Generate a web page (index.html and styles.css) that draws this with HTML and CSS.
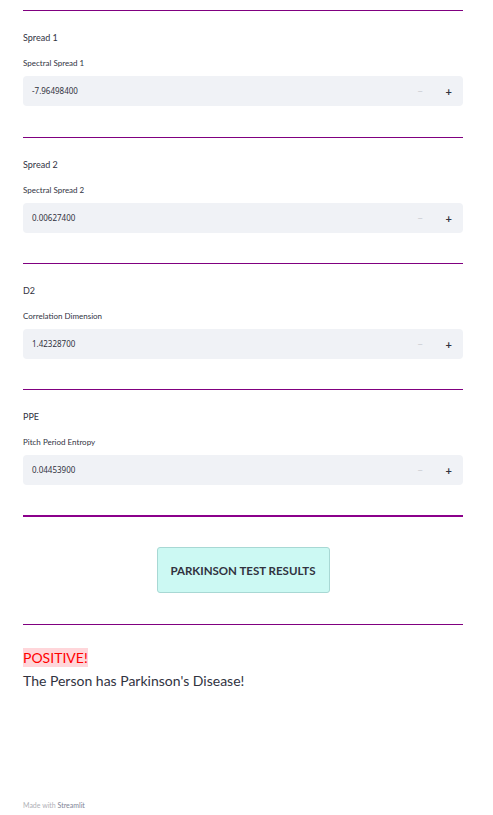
FILE: index.html
```html
<!DOCTYPE html>
<html>
<head>
<meta charset="utf-8">
<link rel="stylesheet" href="styles.css">
</head>
<body>
<main class="page">
  <section class="field">
    <hr class="rule">
    <p class="title">Spread 1</p>
    <label class="label">Spectral Spread 1</label>
    <div class="number">
      <div class="value">-7.96498400</div>
      <div class="steps"><span class="minus">−</span><span class="plus">+</span></div>
    </div>
  </section>
  <section class="field">
    <hr class="rule">
    <p class="title">Spread 2</p>
    <label class="label">Spectral Spread 2</label>
    <div class="number">
      <div class="value">0.00627400</div>
      <div class="steps"><span class="minus">−</span><span class="plus">+</span></div>
    </div>
  </section>
  <section class="field">
    <hr class="rule">
    <p class="title">D2</p>
    <label class="label">Correlation Dimension</label>
    <div class="number">
      <div class="value">1.42328700</div>
      <div class="steps"><span class="minus">−</span><span class="plus">+</span></div>
    </div>
  </section>
  <section class="field">
    <hr class="rule">
    <p class="title">PPE</p>
    <label class="label">Pitch Period Entropy</label>
    <div class="number">
      <div class="value">0.04453900</div>
      <div class="steps"><span class="minus">−</span><span class="plus">+</span></div>
    </div>
  </section>
  <hr class="rule thick">
  <div class="action">
    <button class="btn">PARKINSON TEST RESULTS</button>
  </div>
  <hr class="rule">
  <div class="result">
    <span class="positive">POSITIVE!</span>
    <p class="message">The Person has Parkinson's Disease!</p>
  </div>
  <footer class="footer">Made with <span class="brand">Streamlit</span></footer>
</main>
</body>
</html>
```
FILE: styles.css
```css
html, body {
  margin: 0;
  padding: 0;
  background: #ffffff;
}
body {
  font-family: "Source Sans Pro", Lato, "Noto Sans", sans-serif;
  color: #31333f;
}
.page {
  width: 440px;
  padding: 10px 30px 0 23px;
}
.rule {
  border: 0;
  height: 1px;
  background: #800080;
  margin: 0;
}
.rule.thick {
  height: 2px;
  background: #8b008b;
}
.field {
  padding-bottom: 30px;
}
.field:first-child {
  padding-bottom: 31px;
}
.title {
  margin: 21px 0 0;
  font-size: 9px;
  line-height: 12px;
}
.label {
  display: block;
  margin-top: 14px;
  font-size: 8px;
  line-height: 11px;
}
.number {
  margin-top: 7px;
  height: 30px;
  display: flex;
  background: #f0f2f6;
  border-radius: 4px;
}
.value {
  flex: 1;
  padding-left: 9px;
  font-size: 8px;
  line-height: 30px;
  font-family: "Source Sans Pro", "Noto Sans", sans-serif;
}
.steps {
  width: 57px;
  display: flex;
  align-items: center;
  justify-content: space-around;
  border-radius: 0 4px 4px 0;
}
.minus {
  color: #c9cbd0;
  font-size: 10px;
  font-weight: 400;
}
.plus {
  color: #31333f;
  font-size: 11px;
  font-weight: 700;
}
.action {
  display: flex;
  justify-content: center;
  padding: 30px 0 31px;
}
.btn {
  width: 173px;
  height: 46px;
  background: #ccf9f3;
  border: 1px solid #a8d8d4;
  border-radius: 3px;
  font-family: "Source Sans Pro", Lato, sans-serif;
  font-weight: 700;
  font-size: 11.5px;
  color: #31333f;
}
.result {
  padding-top: 22px;
}
.positive {
  display: inline-block;
  background: #ffd6da;
  color: #ff0000;
  font-size: 14px;
  line-height: 19px;
}
.message {
  margin: 5px 0 0;
  font-size: 14px;
  line-height: 18px;
}
.footer {
  margin-top: 111px;
  font-size: 7px;
  color: #b0b1b6;
}
.brand {
  color: #808495;
}
```
